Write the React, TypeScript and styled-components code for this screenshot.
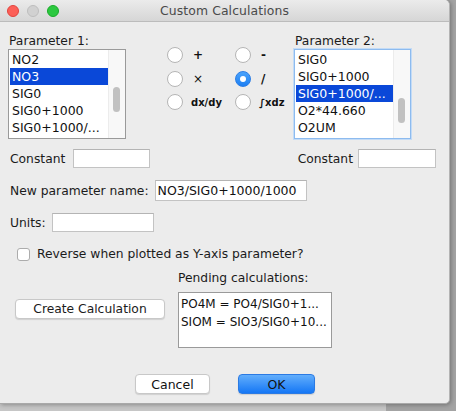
import React from "react";
import styled, { createGlobalStyle } from "styled-components";

const GlobalStyle = createGlobalStyle`
  html, body { margin: 0; padding: 0; }
  body {
    width: 456px;
    height: 411px;
    overflow: hidden;
    background: #c4c4c4;
    font-family: "DejaVu Sans", "Liberation Sans", sans-serif;
    color: #1b1b1b;
  }
`;

const Desktop = styled.div`
  width: 456px;
  height: 411px;
  background: linear-gradient(to right, #c6c6c6 0, #c6c6c6 386px, #a3a3a3 386px);
`;

const Window = styled.div`
  width: 450px;
  height: 404px;
  box-sizing: border-box;
  background: #ececec;
  border-right: 1px solid #b4b4b4;
  border-bottom: 1px solid #a9a9a9;
  border-radius: 0 5px 5px 0;
  box-shadow: 1px 1px 4px rgba(0, 0, 0, 0.3);
  display: flex;
  flex-direction: column;
  overflow: hidden;
`;

const TitleBar = styled.div`
  height: 22px;
  box-sizing: border-box;
  display: grid;
  grid-template-columns: 1fr auto 1fr;
  align-items: center;
  background: linear-gradient(#ebebeb, #d6d6d6);
  border-bottom: 1px solid #bcbcbc;
  border-radius: 0 5px 0 0;
`;

const Lights = styled.div`
  display: flex;
  gap: 8px;
  padding-left: 7px;
`;

const Light = styled.span<{ $c: string; $b: string }>`
  width: 12px;
  height: 12px;
  border-radius: 50%;
  box-sizing: border-box;
  background: ${(p) => p.$c};
  border: 0.5px solid ${(p) => p.$b};
`;

const Title = styled.div`
  font-size: 12.4px;
  color: #4a4a4a;
  letter-spacing: 0.1px;
`;

const Content = styled.div`
  display: flex;
  flex-direction: column;
`;

const TopRow = styled.div`
  display: flex;
  align-items: flex-start;
  padding: 12px 0 0 8px;
`;

const ParamColumn = styled.div<{ $w: number }>`
  width: ${(p) => p.$w}px;
  display: flex;
  flex-direction: column;
`;

const Label = styled.div<{ $indent?: number }>`
  font-size: 12.3px;
  line-height: 14px;
  height: 14px;
  white-space: nowrap;
  padding-left: ${(p) => p.$indent ?? 0}px;
  color: #1b1b1b;
`;

const ListBox = styled.div<{ $focus?: boolean }>`
  margin-top: 1px;
  height: 90px;
  box-sizing: border-box;
  background: #fff;
  border: 1px solid ${(p) => (p.$focus ? "#8dbbef" : "#9a9a9a")};
  box-shadow: ${(p) => (p.$focus ? "0 0 0 1px #c3dbf6" : "none")};
  display: flex;
  overflow: hidden;
`;

const Items = styled.div`
  flex: 1;
  padding: 1px 0 0 1px;
  display: flex;
  flex-direction: column;
`;

const Item = styled.div<{ $sel?: boolean }>`
  height: 17px;
  line-height: 17px;
  font-size: 12.5px;
  padding-left: 2px;
  white-space: nowrap;
  color: ${(p) => (p.$sel ? "#fff" : "#111")};
  background: ${(p) => (p.$sel ? "#0a48d8" : "transparent")};
`;

const ScrollTrack = styled.div`
  width: 16px;
  background: #f8f8f8;
  border-left: 1px solid #ececec;
  position: relative;
`;

const Thumb = styled.div<{ $top: number }>`
  position: absolute;
  left: 4px;
  top: ${(p) => p.$top}px;
  width: 7px;
  height: 25px;
  border-radius: 4px;
  background: #c1c1c1;
`;

const RadioGrid = styled.div`
  margin: 13px 0 0 41px;
  width: 127px;
  display: grid;
  grid-template-columns: 68px 59px;
  row-gap: 7.5px;
`;

const RadioCell = styled.div`
  display: flex;
  align-items: center;
  height: 16px;
`;

const Radio = styled.span<{ $on?: boolean }>`
  width: 16px;
  height: 16px;
  box-sizing: border-box;
  border-radius: 50%;
  background: ${(p) => (p.$on ? "linear-gradient(#4aa3fb, #1c7ff3)" : "#fff")};
  border: 1px solid ${(p) => (p.$on ? "#2a7de6" : "#b5b5b5")};
  display: flex;
  align-items: center;
  justify-content: center;
  flex-shrink: 0;
  &::after {
    content: "";
    width: 6px;
    height: 6px;
    border-radius: 50%;
    background: ${(p) => (p.$on ? "#fff" : "transparent")};
  }
`;

const RadioText = styled.span<{ $small?: boolean; $light?: boolean }>`
  margin-left: ${(p) => (p.$small ? 8 : 10)}px;
  font-size: ${(p) => (p.$small ? 10 : 12)}px;
  font-weight: ${(p) => (p.$light ? 400 : 700)};
  color: #111;
  white-space: nowrap;
`;

const Row = styled.div<{ $mt: number; $pl?: number }>`
  display: flex;
  align-items: center;
  margin-top: ${(p) => p.$mt}px;
  padding-left: ${(p) => p.$pl ?? 10}px;
`;

const Input = styled.div<{ $w: number; $h: number; $ml: number }>`
  width: ${(p) => p.$w}px;
  height: ${(p) => p.$h}px;
  margin-left: ${(p) => p.$ml}px;
  box-sizing: border-box;
  background: #fff;
  border: 1px solid #c3c3c3;
  border-top-color: #b4b4b4;
  font-size: 12.5px;
  line-height: 19px;
  padding-left: 2px;
  white-space: nowrap;
  color: #111;
`;

const Spacer = styled.div`
  flex: 1;
`;

const RightGroup = styled.div`
  display: flex;
  align-items: center;
  padding-right: 13px;
`;

const CheckBox = styled.span`
  width: 13px;
  height: 13px;
  box-sizing: border-box;
  border-radius: 3px;
  border: 1px solid #acacac;
  background: #fff;
  margin-right: 7px;
`;

const BottomGrid = styled.div`
  margin-top: 10px;
  display: grid;
  grid-template-columns: 178px 154px;
  grid-template-rows: 14px auto;
  row-gap: 7px;
`;

const PendingLabel = styled(Label)`
  grid-column: 2;
`;

const CreateButton = styled.button`
  grid-column: 1;
  grid-row: 2;
  margin: 7px 0 0 15px;
  width: 150px;
  height: 20px;
  align-self: start;
  box-sizing: border-box;
  background: #fff;
  border: 1px solid #c8c8c8;
  border-radius: 4px;
  box-shadow: 0 1px 1px rgba(0, 0, 0, 0.12);
  font-family: inherit;
  font-size: 12.3px;
  color: #1b1b1b;
  padding: 0;
`;

const PendingList = styled.div`
  grid-column: 2;
  grid-row: 2;
  height: 56px;
  box-sizing: border-box;
  background: #fff;
  border: 1px solid #9a9a9a;
  padding: 2px 0 0 2px;
`;

const PendingItem = styled.div`
  font-size: 12px;
  line-height: 18px;
  height: 18px;
  white-space: nowrap;
  color: #111;
`;

const ButtonRow = styled.div`
  display: flex;
  gap: 28px;
  margin-top: 26px;
  padding-left: 135px;
`;

const DialogButton = styled.button<{ $primary?: boolean; $w: number }>`
  width: ${(p) => p.$w}px;
  height: 20px;
  box-sizing: border-box;
  border-radius: 4px;
  padding: 0;
  font-family: inherit;
  font-size: 12.5px;
  color: #111;
  background: ${(p) => (p.$primary ? "linear-gradient(#62aefc, #1577f5)" : "#fff")};
  border: 1px solid ${(p) => (p.$primary ? "#2b7ae3" : "#c8c8c8")};
  box-shadow: 0 1px 1px rgba(0, 0, 0, 0.12);
`;

const list1 = ["NO2", "NO3", "SIG0", "SIG0+1000", "SIG0+1000/..."];
const list2 = ["SIG0", "SIG0+1000", "SIG0+1000/...", "O2*44.660", "O2UM"];

export default function App() {
  return (
    <>
      <GlobalStyle />
      <Desktop>
        <Window>
          <TitleBar>
            <Lights>
              <Light $c="#fc5f57" $b="#e0443e" />
              <Light $c="#d1d1d1" $b="#bdbdbd" />
              <Light $c="#2cc840" $b="#1aab29" />
            </Lights>
            <Title>Custom Calculations</Title>
            <span />
          </TitleBar>
          <Content>
            <TopRow>
              <ParamColumn $w={118}>
                <Label $indent={1}>Parameter 1:</Label>
                <ListBox>
                  <Items>
                    {list1.map((t) => (
                      <Item key={t} $sel={t === "NO3"}>{t}</Item>
                    ))}
                  </Items>
                  <ScrollTrack>
                    <Thumb $top={37} />
                  </ScrollTrack>
                </ListBox>
              </ParamColumn>
              <RadioGrid>
                <RadioCell><Radio /><RadioText>+</RadioText></RadioCell>
                <RadioCell><Radio /><RadioText>-</RadioText></RadioCell>
                <RadioCell><Radio /><RadioText $light>×</RadioText></RadioCell>
                <RadioCell><Radio $on /><RadioText>/</RadioText></RadioCell>
                <RadioCell><Radio /><RadioText $small>dx/dy</RadioText></RadioCell>
                <RadioCell><Radio /><RadioText $small>∫xdz</RadioText></RadioCell>
              </RadioGrid>
              <ParamColumn $w={117}>
                <Label $indent={1}>Parameter 2:</Label>
                <ListBox $focus>
                  <Items>
                    {list2.map((t) => (
                      <Item key={t} $sel={t === "SIG0+1000/..."}>{t}</Item>
                    ))}
                  </Items>
                  <ScrollTrack>
                    <Thumb $top={48} />
                  </ScrollTrack>
                </ListBox>
              </ParamColumn>
            </TopRow>
            <Row $mt={10}>
              <Label>Constant</Label>
              <Input $w={77} $h={19} $ml={8} />
              <Spacer />
              <RightGroup>
                <Label>Constant</Label>
                <Input $w={78} $h={19} $ml={5} />
              </RightGroup>
            </Row>
            <Row $mt={12}>
              <Label>New parameter name:</Label>
              <Input $w={152} $h={21} $ml={6}>NO3/SIG0+1000/1000</Input>
            </Row>
            <Row $mt={12}>
              <Label>Units:</Label>
              <Input $w={102} $h={19} $ml={6} />
            </Row>
            <Row $mt={15} $pl={17}>
              <CheckBox />
              <Label>Reverse when plotted as Y-axis parameter?</Label>
            </Row>
            <BottomGrid>
              <PendingLabel>Pending calculations:</PendingLabel>
              <CreateButton>Create Calculation</CreateButton>
              <PendingList>
                <PendingItem>PO4M = PO4/SIG0+1...</PendingItem>
                <PendingItem>SIOM = SIO3/SIG0+10...</PendingItem>
              </PendingList>
            </BottomGrid>
            <ButtonRow>
              <DialogButton $w={75}>Cancel</DialogButton>
              <DialogButton $w={77} $primary>OK</DialogButton>
            </ButtonRow>
          </Content>
        </Window>
      </Desktop>
    </>
  );
}
